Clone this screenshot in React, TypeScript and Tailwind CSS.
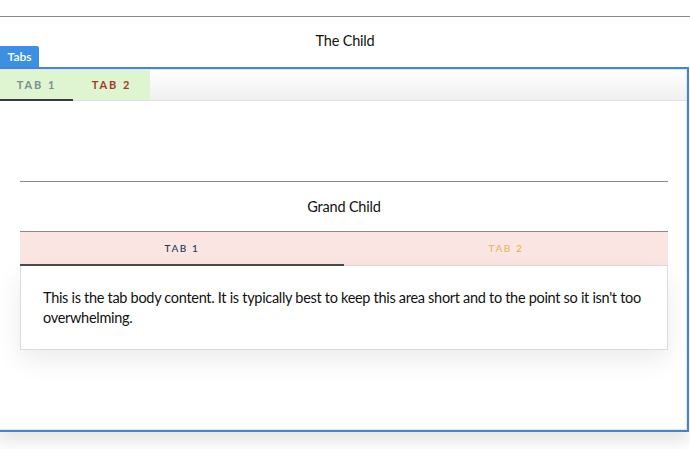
import React from 'react';

const font = { fontFamily: '"Source Sans Pro", Lato, "Noto Sans", sans-serif' };

function OuterTabs() {
  return (
    <div className="flex h-[31px] border-b border-[#e3e3e3] bg-gradient-to-b from-white to-[#f0f0f0]">
      <div className="relative flex w-[73px] items-center justify-center bg-[#dff5d2] text-[11px] font-bold tracking-[0.18em] text-[#7c8e90]">
        TAB 1
        <div className="absolute bottom-[-1px] left-0 right-0 h-[2px] bg-[#3a3a3a]" />
      </div>
      <div className="flex w-[77px] items-center justify-center bg-[#dff5d2] text-[11px] font-bold tracking-[0.18em] text-[#a23b2a]">
        TAB 2
      </div>
    </div>
  );
}

function InnerTabs() {
  return (
    <div className="flex h-[34px] border-b border-[#ecd6d4] bg-[#fae5e3]">
      <div className="relative flex flex-1 items-center justify-center text-[10px] font-medium tracking-[0.16em] text-[#22355a]">
        TAB 1
        <div className="absolute bottom-[-1px] left-0 right-0 h-[2px] bg-[#4a4a4a]" />
      </div>
      <div className="flex flex-1 items-center justify-center text-[10px] font-medium tracking-[0.16em] text-[#e7b65e]">
        TAB 2
      </div>
    </div>
  );
}

export default function App() {
  return (
    <div className="h-[449px] w-[690px] overflow-hidden bg-white text-[#111]" style={font}>
      <div className="pt-4">
        <div className="border-t border-[#8a8a8a]" />
        <div className="relative h-[50px]">
          <div className="pt-[14px] text-center text-[14.5px] leading-5 tracking-[-0.2px]">The Child</div>
          <span className="absolute bottom-0 left-0 flex h-[21px] w-[39px] items-center justify-center rounded-tr-[2px] bg-[#3d8fe3] text-[12px] font-semibold text-white">
            Tabs
          </span>
        </div>
        <div className="ml-[-3px] mr-[1px] h-[365px] border-2 border-[#4d84c4] shadow-[0_10px_16px_rgba(0,0,0,0.10)]">
          <div className="h-full border border-[#d4e8fb]">
            <OuterTabs />
            <div className="pl-5 pr-[18px] pt-[80px]">
              <div className="border-t border-[#8a8a8a]" />
              <div className="flex h-[49px] items-center justify-center text-[14.5px] tracking-[-0.2px]">Grand Child</div>
              <div className="border-t border-[#8a8a8a]" />
              <InnerTabs />
              <div className="border border-t-0 border-[#dcdcdc] bg-white px-[22px] pb-[21px] pt-[22px] text-[14.5px] leading-5 tracking-[-0.3px] shadow-[0_10px_24px_rgba(0,0,0,0.08)]">
                This is the tab body content. It is typically best to keep this area short and to the point so it isn't too
                overwhelming.
              </div>
            </div>
          </div>
        </div>
      </div>
    </div>
  );
}
